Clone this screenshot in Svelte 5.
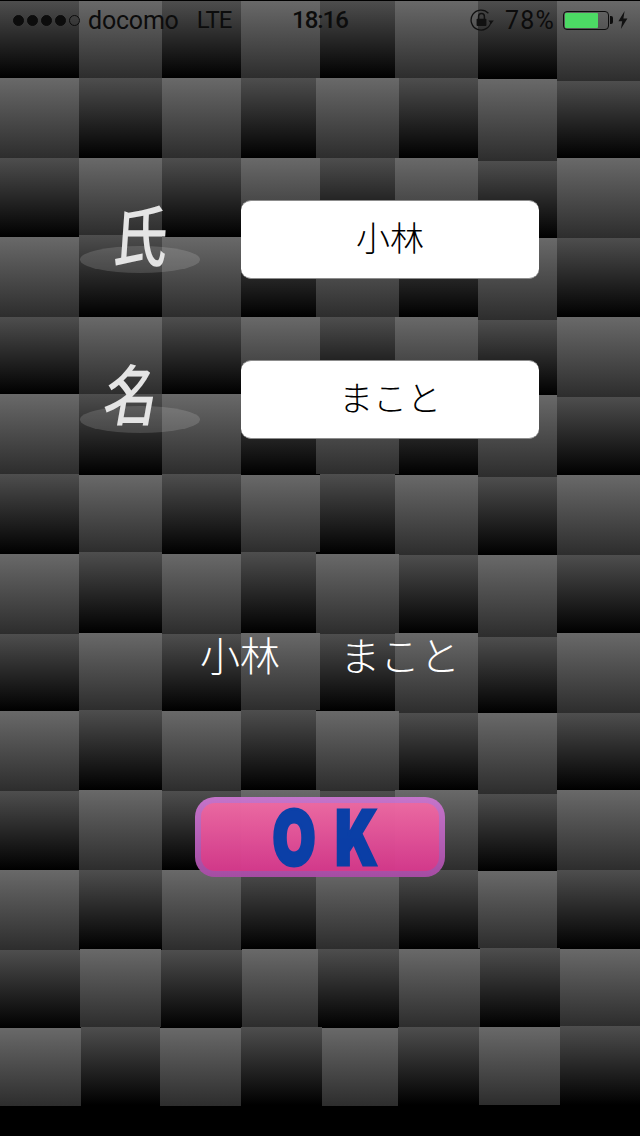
<script>
  const A = [0, 79, 162, 241, 316, 399, 478, 557, 640];
  const B = [0, 79, 162, 241, 320, 395, 478, 557, 640];
  const C = [0, 80, 161, 242, 318, 399, 480, 560, 640];
  const D = [0, 81, 160, 241, 322, 398, 479, 560, 640];
  const bottoms = [
    [B, [78, 78, 78, 78, 78, 78, 79, 81]],
    [A, [158, 158, 158, 158, 158, 158, 161, 158]],
    [B, [237, 235, 237, 237, 237, 237, 238, 238]],
    [A, [317, 317, 317, 317, 317, 317, 320, 317]],
    [B, [394, 394, 394, 394, 394, 394, 395, 397]],
    [A, [474, 475, 474, 475, 474, 475, 477, 475]],
    [B, [554, 552, 554, 552, 554, 555, 555, 555]],
    [A, [634, 633, 634, 633, 634, 633, 637, 633]],
    [B, [711, 710, 711, 710, 711, 713, 713, 713]],
    [A, [791, 790, 791, 790, 791, 790, 794, 790]],
    [B, [870, 870, 870, 870, 870, 870, 871, 870]],
    [A, [950, 949, 950, 949, 949, 949, 948, 949]],
    [C, [1028, 1027, 1028, 1027, 1028, 1027, 1027, 1026]],
    [D, [1106, 1105, 1106, 1105, 1106, 1105, 1105, 1105]]
  ];

  let prev = [1, 1, 1, 1, 1, 1, 1, 1];
  const rows = bottoms.map(([xs, bot], r) => {
    const rowTop = Math.min(...prev);
    const tiles = bot.map((b, c) => ({
      width: xs[c + 1] - xs[c],
      offset: prev[c] - rowTop,
      height: b - prev[c],
      light: (r + c) % 2 === 1
    }));
    prev = bot;
    return { height: Math.min(...bot) - rowTop, tiles };
  });

  const dots = [true, true, true, true, false];
</script>

<div class="screen">
  <div class="tiles" aria-hidden="true">
    {#each rows as row}
      <div class="tile-row" style="height:{row.height}px">
        {#each row.tiles as t}
          <div
            class="tile"
            class:light={t.light}
            style="width:{t.width}px;height:{t.height}px;margin-top:{t.offset}px"
          ></div>
        {/each}
      </div>
    {/each}
  </div>

  <div class="content">
    <header class="status">
      <div class="status-left">
        <div class="signal">
          {#each dots as on}
            <span class="dot" class:on></span>
          {/each}
        </div>
        <span class="carrier">docomo</span>
        <span class="network">LTE</span>
      </div>
      <span class="clock">18:16</span>
      <div class="status-right">
        <svg class="lock" width="24" height="22" viewBox="0 0 24 22">
          <path d="M21 12.5A10 10 0 1 1 18.4 4.2" fill="none" stroke="#111" stroke-width="1.3" />
          <path d="M18.4 11.6h5.4l-2.7 3.4z" fill="#111" />
          <rect x="6.6" y="9.8" width="9.8" height="7.2" rx="0.8" fill="#111" />
          <path d="M8.6 10V7.4a2.9 2.9 0 0 1 5.8 0V10" fill="none" stroke="#111" stroke-width="1.5" />
        </svg>
        <span class="percent">78%</span>
        <div class="battery">
          <div class="battery-body"><div class="battery-fill"></div></div>
          <div class="battery-nub"></div>
        </div>
        <svg class="bolt" width="10" height="18" viewBox="0 0 10 18">
          <path d="M6.6 0 0.4 10.2h3.8L2.9 18l6.5-10.6H5.4z" fill="#111" />
        </svg>
      </div>
    </header>

    <section class="form">
      <div class="form-row">
        <div class="label">
          <span class="plate"></span>
          <span class="kanji sei">氏</span>
        </div>
        <div class="field">小林</div>
      </div>
      <div class="form-row">
        <div class="label">
          <span class="plate"></span>
          <span class="kanji mei">名</span>
        </div>
        <div class="field">まこと</div>
      </div>
    </section>

    <div class="summary">
      <span>小林</span>
      <span>まこと</span>
    </div>

    <button class="ok" type="button">
      <span class="ok-face"><span class="ok-text">O K</span></span>
    </button>
  </div>
</div>

<style>
  :global(body) {
    margin: 0;
    background: #000;
  }

  .screen {
    position: relative;
    width: 640px;
    height: 1136px;
    overflow: hidden;
    background: #000;
    font-family: "Noto Sans CJK JP", "Noto Sans", sans-serif;
  }

  .tiles {
    position: absolute;
    inset: 0;
    padding-top: 1px;
  }

  .tile-row {
    display: flex;
    align-items: flex-start;
  }

  .tile {
    flex: none;
    background: linear-gradient(#4e4e4e, #000);
  }

  .tile.light {
    background: linear-gradient(#696969, #2d2d2d);
  }

  .content {
    position: relative;
    display: flex;
    flex-direction: column;
    align-items: center;
  }

  .status {
    box-sizing: border-box;
    position: relative;
    width: 640px;
    height: 40px;
    padding: 0 12px 0 13px;
    display: flex;
    align-items: center;
    justify-content: space-between;
    color: #0c0c0c;
    font-family: Roboto, "Liberation Sans", sans-serif;
    font-weight: 400;
    font-size: 25px;
  }

  .status-left,
  .status-right {
    display: flex;
    align-items: center;
  }

  .signal {
    display: flex;
    gap: 3px;
    margin-right: 8px;
  }

  .dot {
    box-sizing: border-box;
    width: 11px;
    height: 11px;
    border-radius: 50%;
    border: 1px solid #0c0c0c;
  }

  .dot.on {
    background: #0c0c0c;
  }

  .carrier {
    margin-right: 18px;
    letter-spacing: -0.2px;
  }

  .network {
    font-size: 24px;
    letter-spacing: -1px;
  }

  .clock {
    position: absolute;
    left: 292px;
    font-weight: 500;
    font-size: 24px;
    letter-spacing: -1px;
  }

  .percent {
    margin: 0 8px 0 11px;
    letter-spacing: 1.2px;
  }

  .lock {
    display: block;
  }

  .battery {
    display: flex;
    align-items: center;
    margin-right: 5px;
  }

  .battery-body {
    box-sizing: border-box;
    width: 46px;
    height: 19px;
    padding: 1px;
    border: 1px solid #0c0c0c;
    border-radius: 4px;
  }

  .battery-fill {
    width: 33px;
    height: 100%;
    background: #4cd964;
    border-radius: 1px;
  }

  .battery-nub {
    width: 3px;
    height: 8px;
    margin-left: 1px;
    background: #0c0c0c;
    border-radius: 0 2px 2px 0;
  }

  .bolt {
    display: block;
  }

  .form {
    display: flex;
    flex-direction: column;
    gap: 81px;
    margin-top: 160px;
  }

  .form-row {
    box-sizing: border-box;
    width: 640px;
    padding-left: 80px;
    display: flex;
    gap: 41px;
  }

  .label {
    position: relative;
    width: 120px;
    height: 79px;
    display: flex;
    justify-content: center;
    align-items: center;
  }

  .plate {
    position: absolute;
    left: 0;
    top: 46px;
    width: 120px;
    height: 27px;
    border-radius: 50%;
    background: rgba(255, 255, 255, 0.14);
  }

  .kanji {
    position: relative;
    color: #e4e4e4;
    font-size: 60px;
    font-weight: 500;
    line-height: 79px;
  }

  .sei {
    transform: translate(1px, -8px) skewX(-4deg) scale(0.9, 1.1);
  }

  .mei {
    transform: translate(-7px, -9px) skewX(-10deg) scale(0.9, 1.1);
  }

  .field {
    width: 298px;
    height: 79px;
    padding-bottom: 6px;
    display: flex;
    align-items: center;
    justify-content: center;
    box-sizing: border-box;
    background: #fff;
    border-block: 1px solid #8c8c8c;
    border-radius: 10px;
    color: #000;
    font-size: 34px;
    font-weight: 300;
  }

  .summary {
    display: flex;
    gap: 60px;
    margin: 185px 0 0 20px;
    height: 60px;
    align-items: center;
    color: #fff;
    font-size: 40px;
    font-weight: 300;
    line-height: 60px;
  }

  .ok {
    box-sizing: border-box;
    margin: 113px 0 0;
    padding: 6px;
    width: 250px;
    height: 80px;
    border: 0;
    border-radius: 20px;
    background: linear-gradient(#c976cf, #a84da6);
    opacity: 0.97;
    display: flex;
  }

  .ok-face {
    flex: 1;
    border-radius: 14px;
    background: linear-gradient(#ef6aa4, #d83a8e);
    display: flex;
    align-items: center;
    justify-content: center;
  }

  .ok-text {
    display: block;
    color: #0a40ab;
    font-family: Inter, "Liberation Sans", sans-serif;
    font-weight: 900;
    font-size: 76px;
    line-height: 68px;
    word-spacing: 12px;
    white-space: pre;
    transform: translateX(5px) scaleX(0.73);
    -webkit-text-stroke: 3px #0a40ab;
  }
</style>
